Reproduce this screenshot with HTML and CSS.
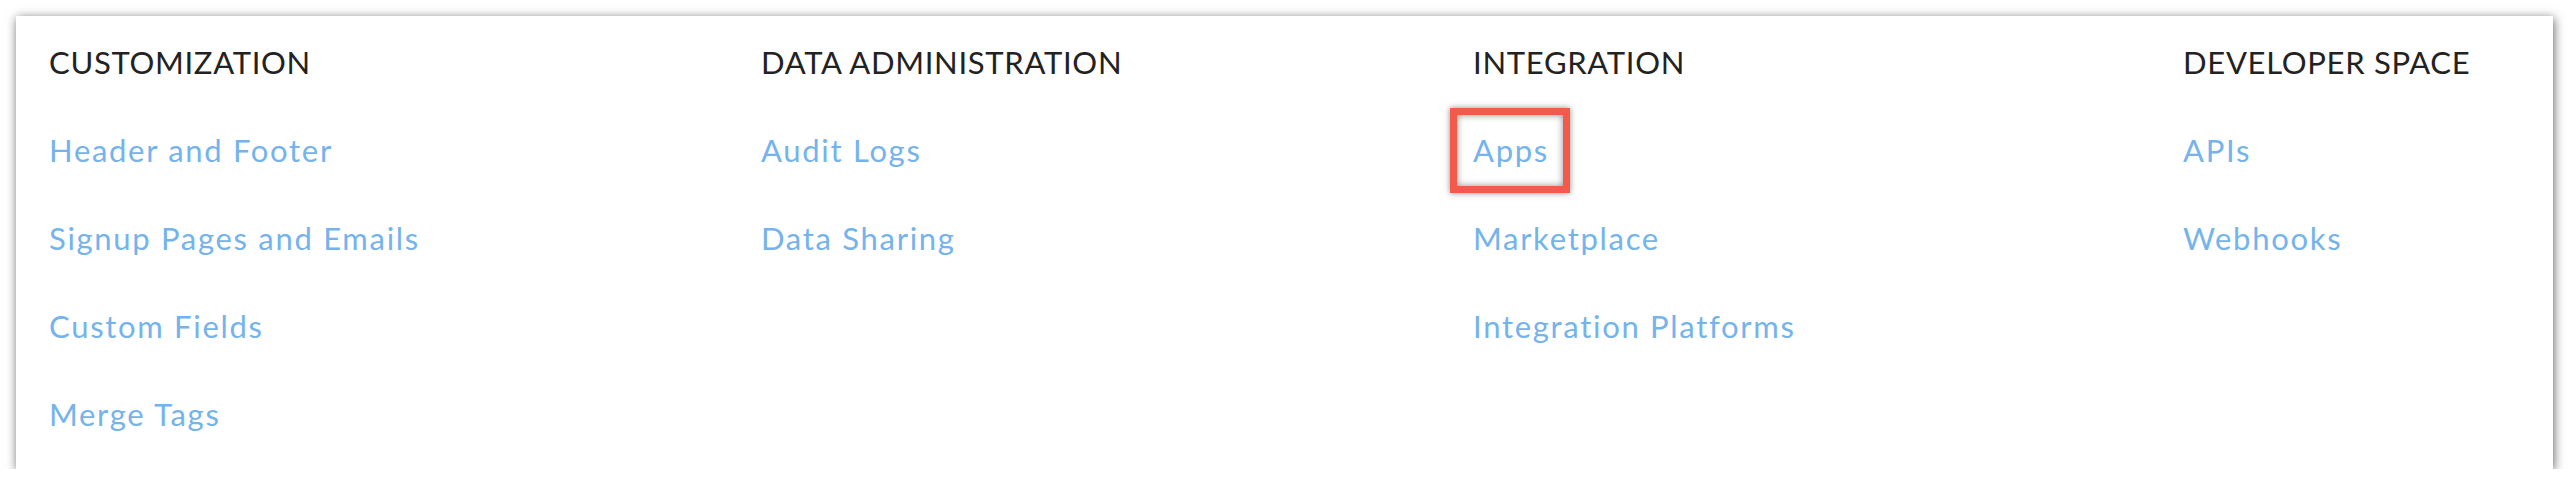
FILE: index.html
```html
<!DOCTYPE html>
<html lang="en">
<head>
<meta charset="utf-8">
<title>Settings</title>
<link rel="stylesheet" href="styles.css">
</head>
<body>
<div class="panel">
  <div class="col">
    <div class="head">CUSTOMIZATION</div>
    <a class="link">Header and Footer</a>
    <a class="link">Signup Pages and Emails</a>
    <a class="link">Custom Fields</a>
    <a class="link">Merge Tags</a>
  </div>
  <div class="col">
    <div class="head">DATA ADMINISTRATION</div>
    <a class="link">Audit Logs</a>
    <a class="link">Data Sharing</a>
  </div>
  <div class="col">
    <div class="head">INTEGRATION</div>
    <a class="link marked">Apps<span class="mark"></span></a>
    <a class="link">Marketplace</a>
    <a class="link">Integration Platforms</a>
  </div>
  <div class="col">
    <div class="head">DEVELOPER SPACE</div>
    <a class="link">APIs</a>
    <a class="link">Webhooks</a>
  </div>
</div>
</body>
</html>
```
FILE: styles.css
```css
html, body {
  margin: 0;
  padding: 0;
  background: #ffffff;
}
body {
  font-family: "Lato", "Liberation Sans", sans-serif;
}
.panel {
  margin: 16px 0 0 16px;
  width: 2537px;
  height: 453px;
  box-sizing: border-box;
  padding: 2px 0 0 33px;
  background: #ffffff;
  box-shadow: 1px 2px 10px rgba(0, 0, 0, 0.6);
  display: grid;
  grid-template-columns: 712px 712px 710px 1fr;
  align-items: start;
}
.col {
  display: flex;
  flex-direction: column;
  align-items: flex-start;
}
.head, .link {
  font-size: 31px;
  line-height: 88px;
  height: 88px;
  white-space: nowrap;
}
.head {
  color: #222222;
  letter-spacing: 0.7px;
}
.link {
  color: #74b3ec;
  letter-spacing: 1.7px;
  text-decoration: none;
}
.marked {
  position: relative;
}
.mark {
  position: absolute;
  left: -23px;
  top: 2px;
  width: 120px;
  height: 85px;
  box-sizing: border-box;
  border: 7px solid #f25b4c;
  box-shadow: 0 0 6px rgba(0, 0, 0, 0.45), inset 0 0 7px rgba(0, 0, 0, 0.45);
}
```
